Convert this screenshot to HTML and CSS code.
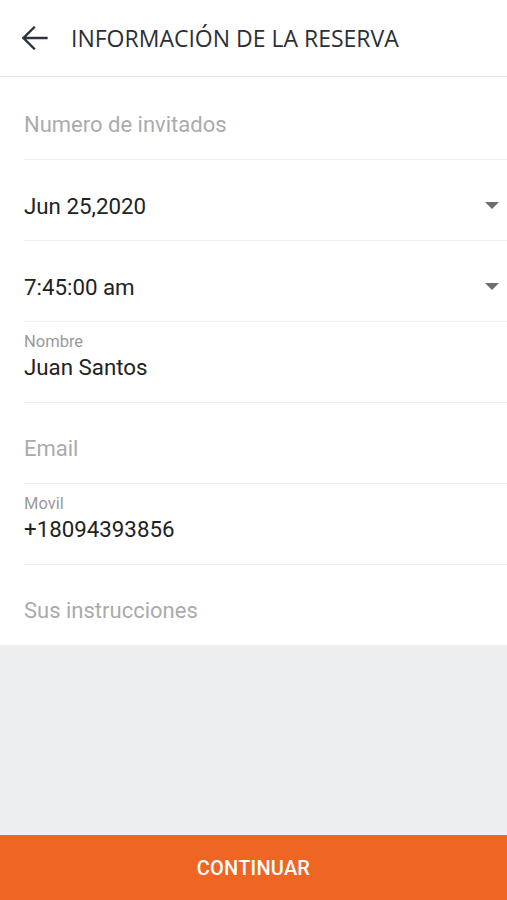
FILE: index.html
```html
<!DOCTYPE html>
<html lang="es">
<head>
<meta charset="utf-8">
<title>Información de la reserva</title>
<link rel="stylesheet" href="styles.css">
</head>
<body>
<div class="screen">
  <header class="topbar">
    <svg class="back" width="26" height="24" viewBox="0 0 26 24" aria-hidden="true">
      <path d="M1.5 12H24.5M12 1.5L1.5 12L12 22.5" fill="none" stroke="#2c333d" stroke-width="2.3" stroke-linecap="square" stroke-linejoin="miter"/>
    </svg>
    <h1 class="title">INFORMACIÓN DE LA RESERVA</h1>
  </header>
  <main class="form">
    <div class="row first"><span class="placeholder">Numero de invitados</span></div>
    <div class="row select"><span class="value">Jun 25,2020</span><span class="caret"></span></div>
    <div class="row select"><span class="value">7:45:00 am</span><span class="caret"></span></div>
    <div class="row labeled"><span class="label">Nombre</span><span class="value">Juan Santos</span></div>
    <div class="row"><span class="placeholder">Email</span></div>
    <div class="row labeled"><span class="label">Movil</span><span class="value">+18094393856</span></div>
    <div class="row last"><span class="placeholder">Sus instrucciones</span></div>
  </main>
  <div class="filler"></div>
  <button class="cta">CONTINUAR</button>
</div>
</body>
</html>
```
FILE: styles.css
```css
* { box-sizing: border-box; }
html, body { margin: 0; padding: 0; }
body {
  font-family: Roboto, "Noto Sans", "Liberation Sans", sans-serif;
  background: #eceef0;
  width: 507px;
  height: 900px;
  overflow: hidden;
}
.screen {
  display: flex;
  flex-direction: column;
  height: 900px;
}
.topbar {
  height: 77px;
  background: #fff;
  border-bottom: 1px solid #e2e2e2;
  display: flex;
  align-items: center;
  padding: 0 0 0 22px;
  gap: 23px;
  flex-shrink: 0;
}
.back { display: block; margin-top: 0; }
.title {
  margin: 0 0 1px 0;
  font-family: "Open Sans", "Noto Sans", sans-serif;
  font-size: 23px;
  font-weight: 500;
  color: #2b3038;
  letter-spacing: 0;
}
.form {
  background: #fff;
  padding-left: 24px;
  flex-shrink: 0;
}
.row {
  height: 81px;
  border-bottom: 1px solid #efefef;
  display: flex;
  align-items: flex-start;
  padding-top: 34px;
  position: relative;
}
.row.first { height: 83px; padding-top: 36px; }
.row.last { border-bottom: none; height: 80px; }
.row.labeled {
  flex-direction: column;
  padding-top: 11px;
}
.placeholder {
  font-size: 22px;
  line-height: 24px;
  color: #ababab;
}
.value {
  font-size: 22.3px;
  line-height: 24px;
  color: #222;
}
.label {
  font-size: 16.5px;
  line-height: 18px;
  color: #9a9a9a;
  margin-bottom: 4px;
}
.select { justify-content: space-between; padding-right: 8px; }
.caret {
  width: 0;
  height: 0;
  border-left: 7px solid transparent;
  border-right: 7px solid transparent;
  border-top: 7px solid #6e6e6e;
  margin-top: 8px;
}
.filler { flex: 1; background: #eceef0; }
.cta {
  height: 65px;
  border: none;
  background: #ee6524;
  color: #fff;
  font-family: Roboto, "Noto Sans", "Liberation Sans", sans-serif;
  font-size: 20px;
  font-weight: 500;
  letter-spacing: 0.2px;
  width: 100%;
  flex-shrink: 0;
  padding: 0;
}
```
